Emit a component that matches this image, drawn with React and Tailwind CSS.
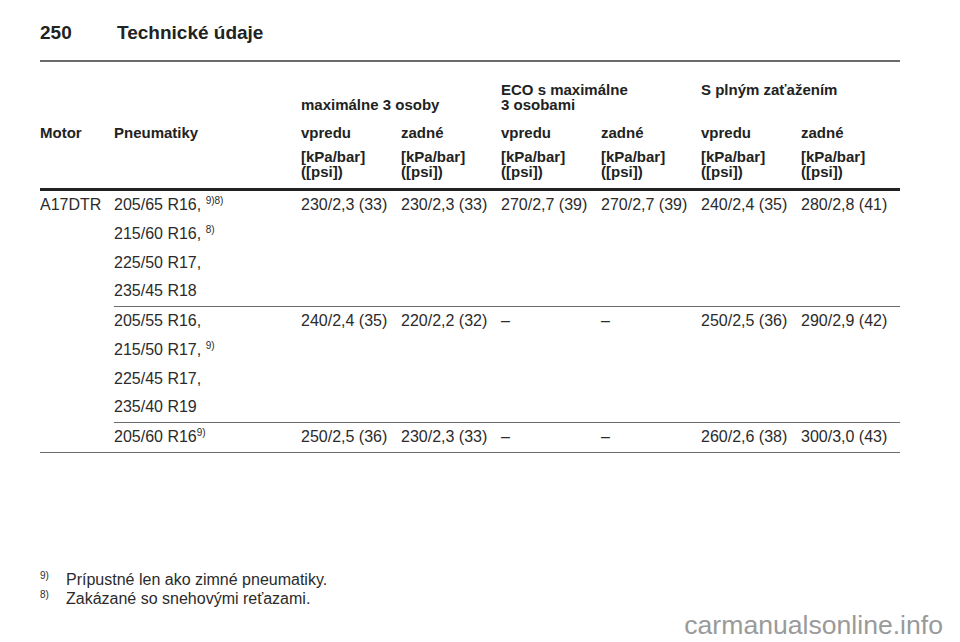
import React from 'react';

const font = { fontFamily: '"Liberation Sans", Arial, sans-serif' };

const headGrid = "grid grid-cols-[74px_187px_repeat(5,100px)_1fr]";
const rowGrid = "grid grid-cols-[187px_repeat(5,100px)_1fr]";

const Sup = ({ children }) => (
  <span className="align-super text-[10px] leading-none">{children}</span>
);

const rows = [
  {
    tires: [
      <>205/65 R16, <Sup>9)8)</Sup></>,
      <>215/60 R16, <Sup>8)</Sup></>,
      '225/50 R17,',
      '235/45 R18',
    ],
    values: ['230/2,3 (33)', '230/2,3 (33)', '270/2,7 (39)', '270/2,7 (39)', '240/2,4 (35)', '280/2,8 (41)'],
  },
  {
    tires: [
      '205/55 R16,',
      <>215/50 R17, <Sup>9)</Sup></>,
      '225/45 R17,',
      '235/40 R19',
    ],
    values: ['240/2,4 (35)', '220/2,2 (32)', '–', '–', '250/2,5 (36)', '290/2,9 (42)'],
  },
  {
    tires: [<>205/60 R16<Sup>9)</Sup></>],
    values: ['250/2,5 (36)', '230/2,3 (33)', '–', '–', '260/2,6 (38)', '300/3,0 (43)'],
  },
];

const units = [0, 1, 2, 3, 4, 5];

export default function App() {
  return (
    <div className="relative h-[642px] w-[960px] bg-white text-[#2b2b2b]" style={font}>
      <div className="ml-[40px] w-[860px] pt-[23px]">
        {/* page title */}
        <div className="flex text-[19px] font-bold leading-[19px] text-[#222]">
          <span className="w-[77px]">250</span>
          <span>Technické údaje</span>
        </div>
        <div className="mt-[18px] h-[2px] bg-[#6b6b6b]" />

        {/* table head */}
        <div className="border-b-[3px] border-[#222] pt-[20px] pb-[9px] text-[15px] font-bold leading-[15px] text-[#222]">
          <div className={headGrid + " h-[30px]"}>
            <div className="col-start-3 col-span-2 self-end">maximálne 3 osoby</div>
            <div className="col-span-2">ECO s maximálne<br />3 osobami</div>
            <div className="col-span-2">S plným zaťažením</div>
          </div>
          <div className={headGrid + " mt-[13px]"}>
            <div>Motor</div>
            <div>Pneumatiky</div>
            <div>vpredu</div>
            <div>zadné</div>
            <div>vpredu</div>
            <div>zadné</div>
            <div>vpredu</div>
            <div>zadné</div>
          </div>
          <div className={headGrid + " mt-[9px]"}>
            <div className="col-start-3">[kPa/bar]<br />([psi])</div>
            {units.slice(1).map((u) => (
              <div key={u}>[kPa/bar]<br />([psi])</div>
            ))}
          </div>
        </div>

        {/* table body */}
        <div className="flex border-b-[1.5px] border-[#6b6b6b] text-[16px] leading-[28.75px]">
          <div className="w-[74px]">A17DTR</div>
          <div className="flex-1">
            {rows.map((row, i) => (
              <div
                key={i}
                className={rowGrid + (i < rows.length - 1 ? " border-b-[1.5px] border-[#6b6b6b]" : "")}
              >
                <div>
                  {row.tires.map((t, j) => (
                    <div key={j}>{t}</div>
                  ))}
                </div>
                {row.values.map((v, j) => (
                  <div key={j}>{v}</div>
                ))}
              </div>
            ))}
          </div>
        </div>

        {/* footnotes */}
        <div className="mt-[117px] text-[16px] leading-[19px] text-[#2b2b2b]">
          <div className="flex">
            <span className="w-[26px]"><Sup>9)</Sup></span>
            <span>Prípustné len ako zimné pneumatiky.</span>
          </div>
          <div className="flex">
            <span className="w-[26px]"><Sup>8)</Sup></span>
            <span>Zakázané so snehovými reťazami.</span>
          </div>
        </div>
      </div>

      <div className="absolute right-[17px] top-[612px] text-[26.6px] leading-[26px] text-[#9a9a9a]">
        carmanualsonline.info
      </div>
    </div>
  );
}
